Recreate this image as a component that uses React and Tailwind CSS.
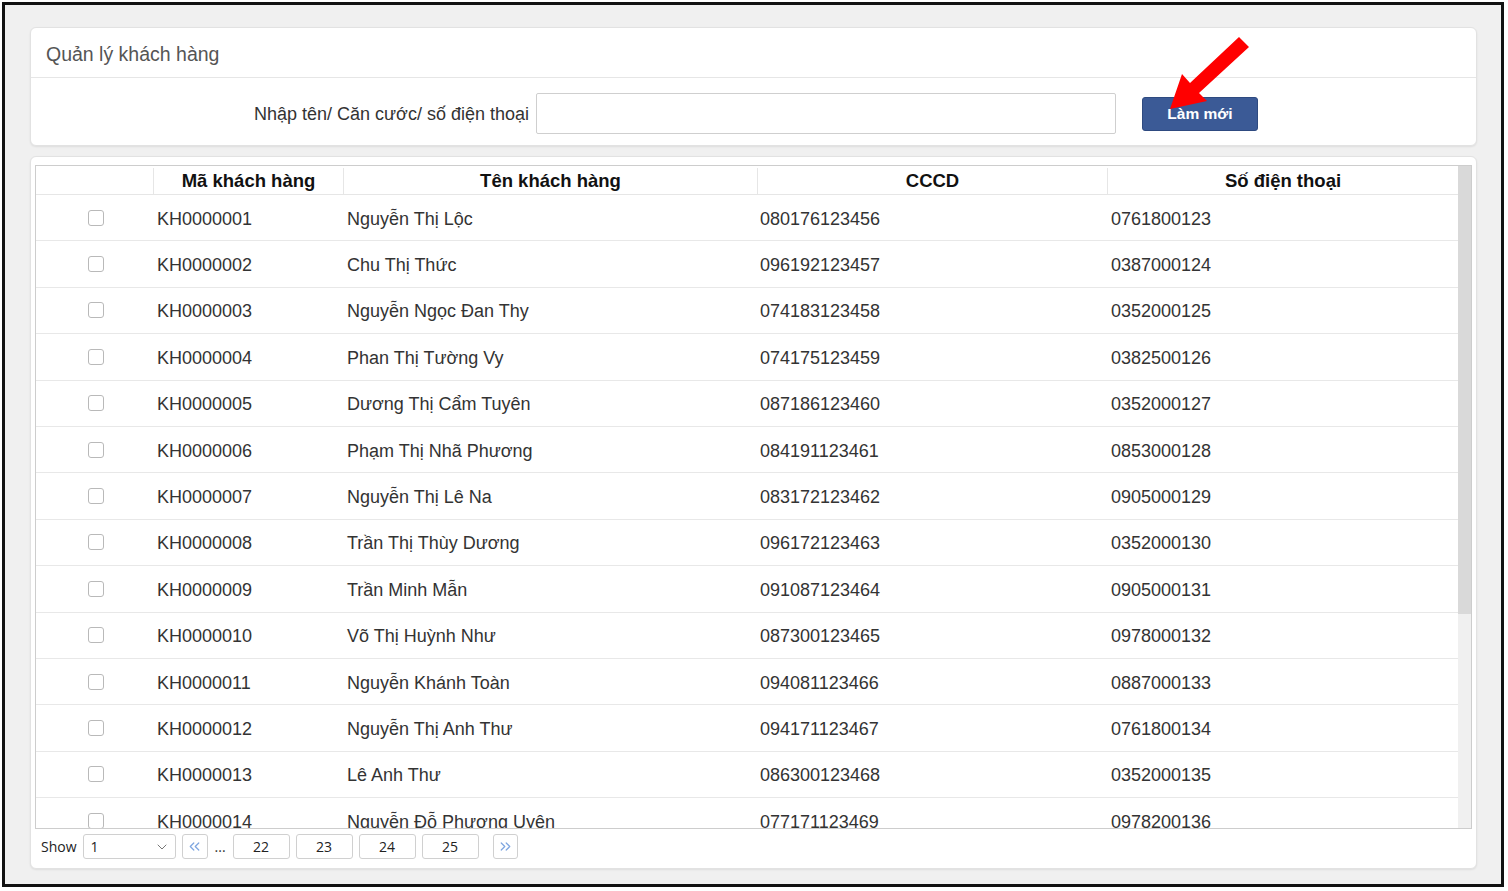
import { ChevronDown, ChevronsLeft, ChevronsRight } from "lucide-react";

const customers = [
  ["KH0000001", "Nguyễn Thị Lộc", "080176123456", "0761800123"],
  ["KH0000002", "Chu Thị Thức", "096192123457", "0387000124"],
  ["KH0000003", "Nguyễn Ngọc Đan Thy", "074183123458", "0352000125"],
  ["KH0000004", "Phan Thị Tường Vy", "074175123459", "0382500126"],
  ["KH0000005", "Dương Thị Cẩm Tuyên", "087186123460", "0352000127"],
  ["KH0000006", "Phạm Thị Nhã Phương", "084191123461", "0853000128"],
  ["KH0000007", "Nguyễn Thị Lê Na", "083172123462", "0905000129"],
  ["KH0000008", "Trần Thị Thùy Dương", "096172123463", "0352000130"],
  ["KH0000009", "Trần Minh Mẫn", "091087123464", "0905000131"],
  ["KH0000010", "Võ Thị Huỳnh Như", "087300123465", "0978000132"],
  ["KH0000011", "Nguyễn Khánh Toàn", "094081123466", "0887000133"],
  ["KH0000012", "Nguyễn Thị Anh Thư", "094171123467", "0761800134"],
  ["KH0000013", "Lê Anh Thư", "086300123468", "0352000135"],
  ["KH0000014", "Nguyễn Đỗ Phương Uyên", "077171123469", "0978200136"],
];

const font = "font-[family-name:'Liberation_Sans',Arial,sans-serif]";
const uiFont = "font-[family-name:'Open_Sans','Noto_Sans',sans-serif]";

function Arrow() {
  return (
    <svg className="absolute left-0 top-0 pointer-events-none" width="1508" height="891">
      <polygon
        points="1239,37 1249,47 1199,93 1207,101 1170,109 1182,74 1190,83"
        fill="#ff0000"
      />
    </svg>
  );
}

function PageBtn({ children, className = "" }) {
  return (
    <div className={`h-[25px] flex items-center justify-center border border-[#d0d0d0] rounded-[3px] bg-white text-[14px] text-[#222] ${className}`}>
      {children}
    </div>
  );
}

export default function App() {
  return (
    <div className="relative w-[1508px] h-[891px] bg-white pt-[2px] pl-[2px] pr-[4px] pb-[4px]">
      <div className={`h-full border-[3px] border-[#111] bg-[#f0f0f0] pt-[22px] pl-[25px] pr-[24px] flex flex-col ${font}`}>
        {/* Search panel */}
        <div className="h-[119px] bg-white rounded-[6px] border border-[#e2e2e2] shadow-[0_1px_2px_rgba(0,0,0,0.08)] flex flex-col">
          <div className="h-[50px] flex items-center pl-[15px] pt-[5px] border-b border-[#e6e6e6] text-[19.5px] text-[#555]">
            Quản lý khách hàng
          </div>
          <div className="flex items-start">
            <div className="w-[498px] mt-[25px] text-right text-[18px] leading-[22px] text-[#333]">Nhập tên/ Căn cước/ số điện thoại</div>
            <input className="ml-[7px] mt-[15px] w-[580px] h-[41px] border border-[#cfcfcf] rounded-[2px] bg-white outline-none px-2" />
            <button className={`ml-[26px] mt-[19px] w-[116px] h-[34px] rounded-[3px] bg-[#3b5a96] border border-[#2e4a80] text-white text-[15.5px] font-bold ${font}`}>
              Làm mới
            </button>
          </div>
        </div>

        {/* Table panel */}
        <div className="mt-[10px] h-[713px] bg-white rounded-[6px] border border-[#e2e2e2] shadow-[0_1px_2px_rgba(0,0,0,0.08)] pt-[8px] px-[4px] flex flex-col">
          <div className="h-[664px] border border-[#cdcdcd] flex overflow-hidden">
            <div className="w-[1422px] flex flex-col">
              <div className="h-[29px] shrink-0 flex border-b border-[#e6e6e6] text-[18.5px] font-bold text-[#111] pt-[2px]">
                <div className="w-[118px] border-r border-[#e6e6e6]" />
                <div className="w-[190px] border-r border-[#e6e6e6] flex items-center justify-center">Mã khách hàng</div>
                <div className="w-[414px] border-r border-[#e6e6e6] flex items-center justify-center">Tên khách hàng</div>
                <div className="w-[350px] border-r border-[#e6e6e6] flex items-center justify-center">CCCD</div>
                <div className="w-[350px] flex items-center justify-center">Số điện thoại</div>
              </div>
              <div className="flex-1 overflow-hidden">
                {customers.map((c) => (
                  <div key={c[0]} className="h-[46.4px] flex items-center border-b border-[#e8e8e8] text-[18px] text-[#333] pt-[3px]">
                    <div className="w-[118px] flex justify-center pl-[2px] -mt-[3px]">
                      <span className="w-[16px] h-[16px] rounded-[3px] border border-[#b9b9b9] bg-white" />
                    </div>
                    <div className="w-[190px] pl-[3px]">{c[0]}</div>
                    <div className="w-[414px] pl-[3px]">{c[1]}</div>
                    <div className="w-[350px] pl-[2px]">{c[2]}</div>
                    <div className="w-[350px] pl-[3px]">{c[3]}</div>
                  </div>
                ))}
              </div>
            </div>
            {/* scrollbar */}
            <div className="w-[14px] bg-[#f0f0f0] flex flex-col">
              <div className="h-[448px] bg-[#d9d9d9]" />
            </div>
          </div>

          <div className={`flex items-center pt-[5px] pl-[6px] ${uiFont} text-[14px] text-[#222]`}>
            <span className="mr-[6px]">Show</span>
            <div className="w-[93px] h-[25px] border border-[#d0d0d0] rounded-[3px] flex items-center justify-between pl-[7px] pr-[5px]">
              <span>1</span>
              <ChevronDown size={16} strokeWidth={1.5} color="#777" />
            </div>
            <PageBtn className="ml-[6px] w-[26px]">
              <ChevronsLeft size={17} strokeWidth={1.75} color="#7fa6e0" />
            </PageBtn>
            <span className="mx-[7px] text-[#333]">...</span>
            <PageBtn className="w-[57px]">22</PageBtn>
            <PageBtn className="ml-[6px] w-[57px]">23</PageBtn>
            <PageBtn className="ml-[6px] w-[57px]">24</PageBtn>
            <PageBtn className="ml-[6px] w-[57px]">25</PageBtn>
            <PageBtn className="ml-[14px] w-[25px]">
              <ChevronsRight size={17} strokeWidth={1.75} color="#7fa6e0" />
            </PageBtn>
          </div>
        </div>
      </div>
      <Arrow />
    </div>
  );
}
